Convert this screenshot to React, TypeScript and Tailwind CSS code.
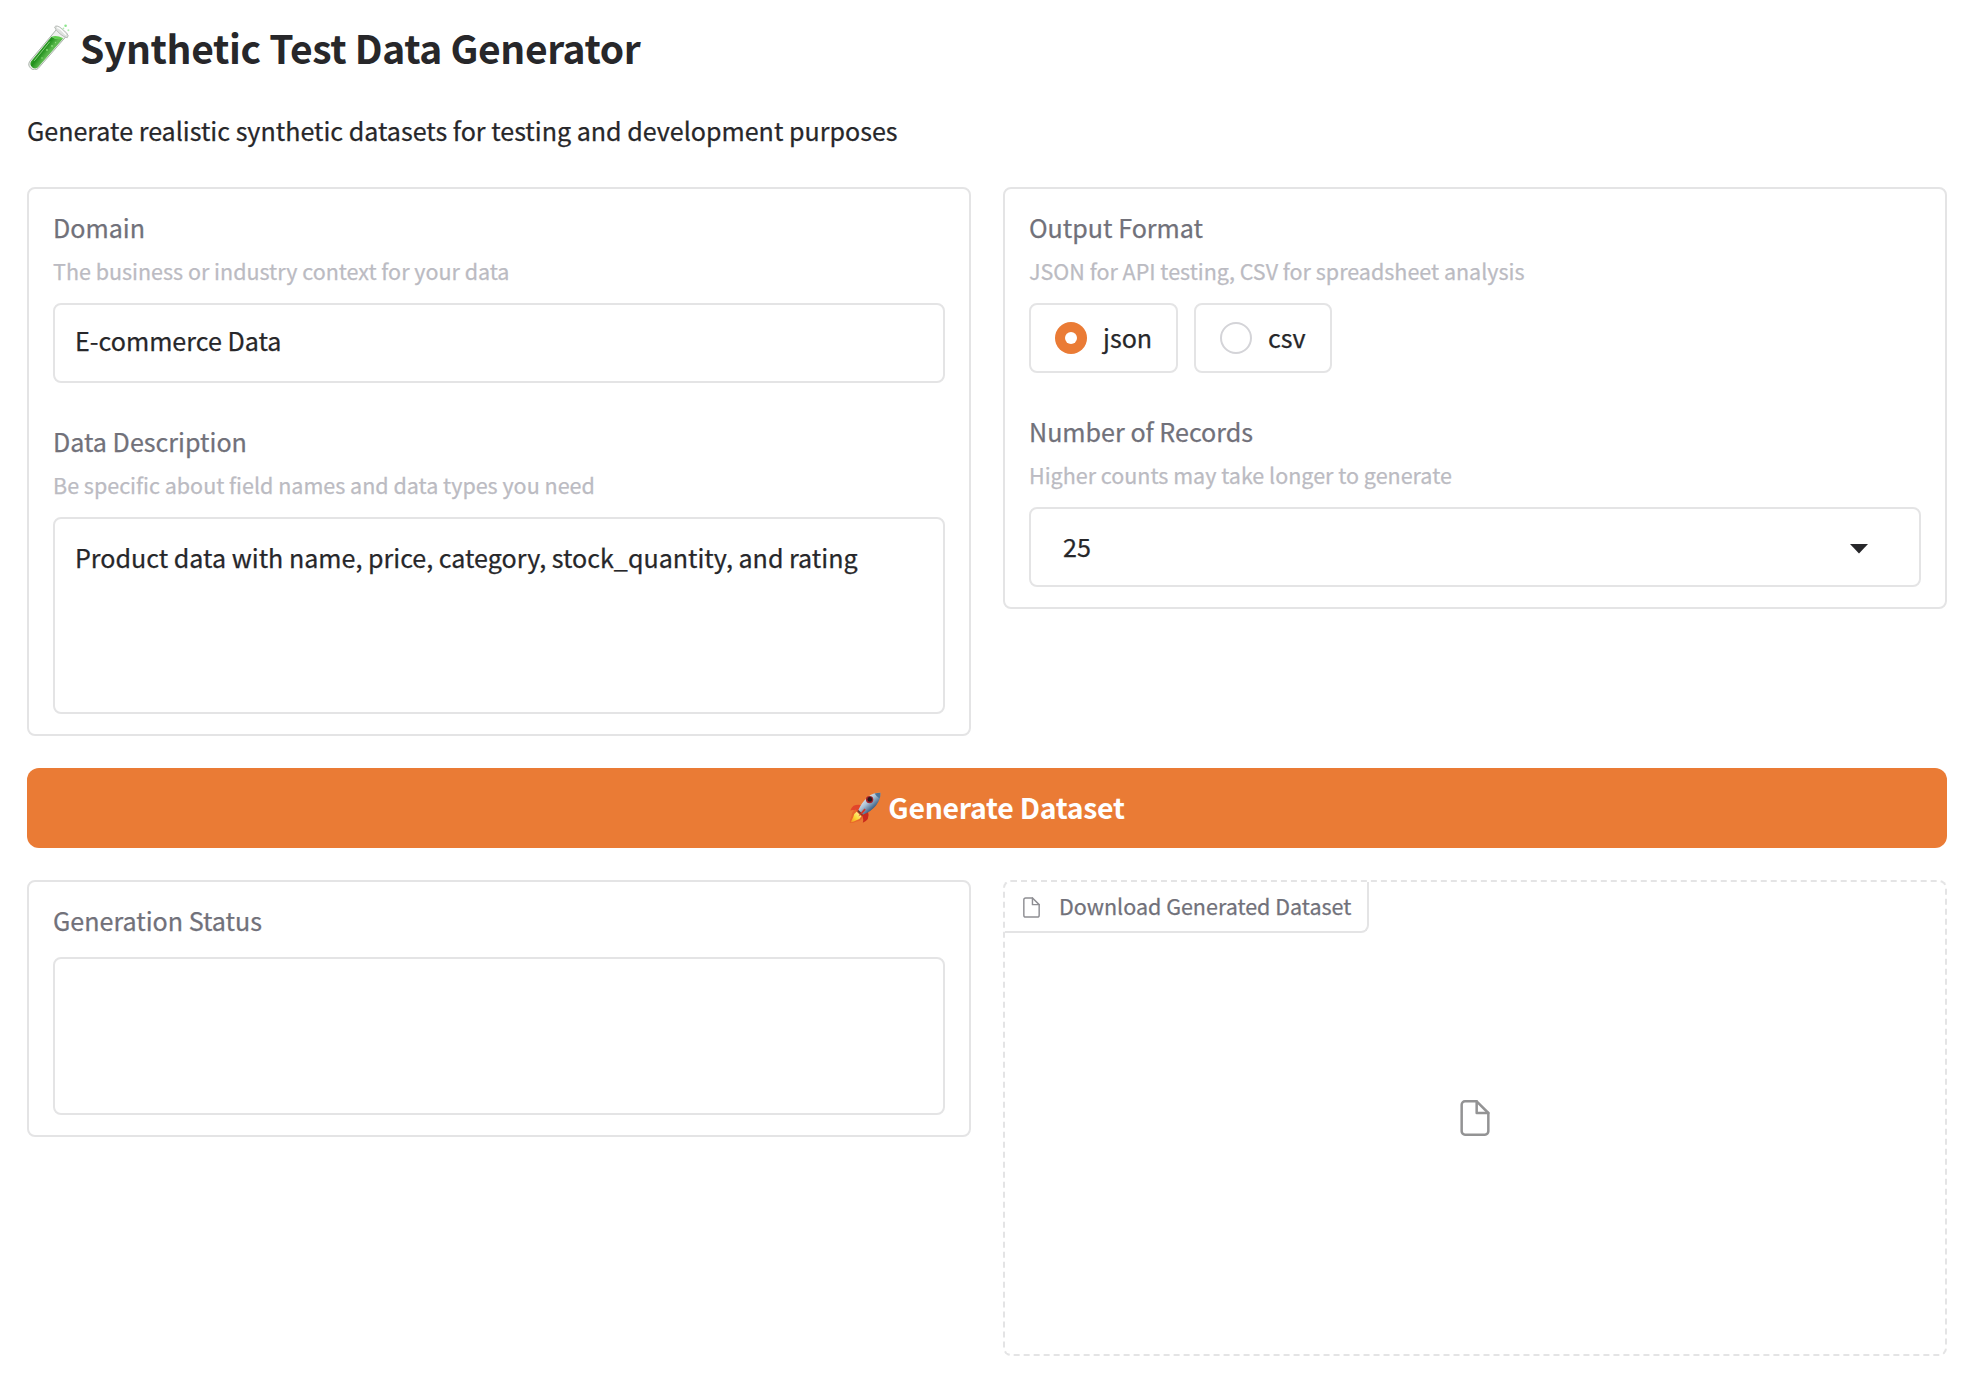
import type { ReactNode } from "react";

function TestTubeIcon() {
  return (
    <svg className="-mt-[3px] h-[48px] w-[46px]" viewBox="0 0 46 48" fill="none">
      <defs>
        <linearGradient id="tube-liquid" x1="8" y1="24" x2="20" y2="33" gradientUnits="userSpaceOnUse">
          <stop offset="0" stopColor="#6cc25c" />
          <stop offset="0.3" stopColor="#3faa33" />
          <stop offset="0.6" stopColor="#1f8f1b" />
          <stop offset="1" stopColor="#5cb84e" />
        </linearGradient>
      </defs>
      <path d="M29.5 7.5 L2.8 39.2 A5.6 5.6 0 0 0 11.2 46.4 L38.8 14.8 Z" fill="#eef0ee" stroke="#a9b3a9" strokeWidth="1" />
      <path d="M24.5 14.8 L4 39.6 A4.6 4.6 0 0 0 10.8 45.4 L36.3 16.3 Q30 18.5 24.5 14.8 Z" fill="url(#tube-liquid)" />
      <path d="M24.5 14.8 Q29 12.5 36.3 16.3 Q31 19 24.5 14.8 Z" fill="#5fce4c" />
      <path d="M22.5 20 L7.5 38.5" stroke="#b4e6a6" strokeWidth="1" strokeLinecap="round" opacity="0.7" />
      <g fill="#8be07a">
        <circle cx="20" cy="28" r="0.9" />
        <circle cx="25" cy="24" r="0.9" />
        <circle cx="15" cy="36" r="0.8" />
        <circle cx="28.5" cy="20.5" r="0.7" />
      </g>
      <path d="M27.6 5 Q29.5 2.5 34 6 L39.5 10.8 Q42.5 14 40.2 15.8 Q37.5 15.5 33 11.8 Q28 7.6 27.6 5 Z" fill="#dfe2df" stroke="#b3b8b3" strokeWidth="0.9" />
      <path d="M30.4 5.6 Q33 6 38.5 12.4" stroke="#ffffff" strokeWidth="1.2" strokeLinecap="round" />
      <circle cx="38.6" cy="3.8" r="1.3" fill="#8be58b" />
      <circle cx="41.4" cy="8.2" r="1" fill="#b2efb2" />
      <circle cx="36.4" cy="6.4" r="0.9" fill="#b2efb2" />
    </svg>
  );
}

function RocketIcon() {
  return (
    <svg className="h-8 w-8" viewBox="0 0 32 32" fill="none">
      <defs>
        <linearGradient id="rocket-body" x1="13" y1="8" x2="22" y2="18" gradientUnits="userSpaceOnUse">
          <stop offset="0" stopColor="#dfeaf3" />
          <stop offset="0.45" stopColor="#a9bfd2" />
          <stop offset="1" stopColor="#3f6287" />
        </linearGradient>
        <linearGradient id="rocket-flame" x1="11" y1="20" x2="1" y2="31" gradientUnits="userSpaceOnUse">
          <stop offset="0" stopColor="#fff6a0" />
          <stop offset="0.5" stopColor="#fbd633" />
          <stop offset="1" stopColor="#f08a1c" />
        </linearGradient>
      </defs>
      <path d="M13 13.2 Q8 12.2 4.6 13.8 Q2.6 15.4 1.2 18.4 Q5 17 8.6 19.6 Z" fill="#e2452a" />
      <path d="M19 19.6 Q20.4 23.6 18.8 27 Q17 29.4 13.8 30.8 Q15.2 27 12.4 23.6 Z" fill="#c92a1c" />
      <path d="M6.6 17.6 Q2.6 19.6 2.6 24 Q0.8 27.6 0.8 31 Q4.6 31 7.8 29.4 Q12.6 29 14 25 Z" fill="#e8672a" />
      <path d="M7.6 19.8 Q4.6 21.6 4.2 25.2 Q2.6 28 2 30.2 Q5 29.6 7.4 28.2 Q11 27.4 12.4 24.2 Z" fill="url(#rocket-flame)" />
      <path d="M31.4 0.8 Q24 0.6 19 5 Q12.4 10.6 9.4 18 L14 22.6 Q22 19.6 27 13.4 Q31.8 7.6 31.4 0.8 Z" fill="url(#rocket-body)" />
      <path d="M31.4 0.8 Q28.4 0.8 25.6 1.6 Q27.6 5 30.6 6.6 Q31.5 3.8 31.4 0.8 Z" fill="#4d7396" />
      <path d="M9.4 18 L14 22.6 L12.4 23.6 L8.4 19.6 Z" fill="#6b3a2f" />
      <circle cx="20.6" cy="7.6" r="3.7" fill="#a3222a" />
      <circle cx="20.8" cy="7.4" r="2.3" fill="#28191f" />
      <path d="M15.4 16.4 Q12 20.4 9.2 24.6 Q13.6 22 16.8 17.8 Z" fill="#d63423" />
    </svg>
  );
}

function FileIcon({ className }: { className: string }) {
  return (
    <svg
      className={className}
      viewBox="0 0 24 24"
      fill="none"
      stroke="currentColor"
      strokeWidth="1.5"
      strokeLinecap="round"
      strokeLinejoin="round"
    >
      <path d="M13 2H6a2 2 0 0 0-2 2v16a2 2 0 0 0 2 2h12a2 2 0 0 0 2-2V9z" />
      <polyline points="13 2 13 9 20 9" />
    </svg>
  );
}

function Panel({ children }: { children: ReactNode }) {
  return (
    <section className="rounded-[8px] border-2 border-[#e4e4e5] px-6 pt-[18px] pb-5">{children}</section>
  );
}

function Field({ label, info, children }: { label: string; info?: string; children: ReactNode }) {
  return (
    <div>
      <div className="text-[25.1px] leading-[40px] text-[#71717a]">{label}</div>
      {info && <div className="mt-2 mb-4 text-[21.5px] leading-[32px] text-[#bbbbc2]">{info}</div>}
      {children}
    </div>
  );
}

function RadioOption({ label, checked, className }: { label: string; checked?: boolean; className: string }) {
  return (
    <div
      className={`flex h-[70px] items-center gap-4 rounded-[8px] border-2 border-[#e4e4e5] pl-6 ${className}`}
    >
      {checked ? (
        <span className="flex size-8 items-center justify-center rounded-full bg-[#ea7b35]">
          <span className="size-3 rounded-full bg-white" />
        </span>
      ) : (
        <span className="size-8 rounded-full border-2 border-[#d4d4d8]" />
      )}
      <span className="-mt-0.5 text-[25.1px] leading-[40px]">{label}</span>
    </div>
  );
}

const box = "rounded-[8px] border-2 border-[#e4e4e5]";

export default function App() {
  return (
    <div className="h-[1378px] bg-white pt-[19px] pr-[23px] pl-[27px] font-['Noto_Sans_CJK_SC',sans-serif] text-[#27272a] [-webkit-text-stroke:0.25px_currentColor]">
      <h1 className="flex h-14 items-center gap-[7px] text-[39px] leading-[56px] font-bold tracking-[-0.38px] [-webkit-text-stroke:0px]">
        <TestTubeIcon />
        Synthetic Test Data Generator
      </h1>
      <p className="mt-[35px] text-[25.07px] leading-[40px]">
        Generate realistic synthetic datasets for testing and development purposes
      </p>

      <div className="mt-[37px] grid grid-cols-2 items-start gap-8">
        <Panel>
          <div className="flex flex-col gap-[38px]">
            <Field label="Domain" info="The business or industry context for your data">
              <div className={`h-20 pt-[15px] pl-5 text-[25.1px] leading-[40px] ${box}`}>E-commerce Data</div>
            </Field>
            <Field label="Data Description" info="Be specific about field names and data types you need">
              <div className={`h-[197px] pt-[18px] pl-5 text-[25.07px] leading-[40px] ${box}`}>
                Product data with name, price, category, stock_quantity, and rating
              </div>
            </Field>
          </div>
        </Panel>
        <Panel>
          <div className="flex flex-col gap-[38px]">
            <Field label="Output Format" info="JSON for API testing, CSV for spreadsheet analysis">
              <div className="flex gap-4">
                <RadioOption label="json" checked className="w-[149px]" />
                <RadioOption label="csv" className="w-[138px]" />
              </div>
            </Field>
            <Field label="Number of Records" info="Higher counts may take longer to generate">
              <div className={`flex h-20 items-start justify-between pr-[51px] pl-8 ${box}`}>
                <span className="mt-[17px] text-[25.1px] leading-[40px]">25</span>
                <svg className="mt-[35px] h-[10px] w-[18px]" viewBox="0 0 18 10">
                  <path d="M0 0H18L9 9.4Z" fill="#27272a" />
                </svg>
              </div>
            </Field>
          </div>
        </Panel>
      </div>

      <button className="mt-8 flex h-20 w-full items-center justify-center gap-[7px] rounded-[12px] bg-[#ea7b35] text-[28.4px] leading-[40px] font-bold tracking-[-0.25px] text-white [-webkit-text-stroke:0px]">
        <RocketIcon />
        <span className="-mt-[3px]">Generate Dataset</span>
      </button>

      <div className="mt-8 grid grid-cols-2 items-start gap-8">
        <Panel>
          <Field label="Generation Status">
            <div className={`mt-[17px] h-[158px] ${box}`} />
          </Field>
        </Panel>
        <section className="flex h-[476px] flex-col rounded-[8px] border-2 border-dashed border-[#e4e4e5]">
          <div className="flex h-[51px] w-[364px] shrink-0 items-start gap-4 rounded-br-[8px] border-r-2 border-b-2 border-[#e4e4e5] pl-[15px] text-[21.5px] leading-[32px] text-[#71717a]">
            <FileIcon className="mt-[13.5px] size-[23px] text-[#8e8e93]" />
            <span className="mt-2">Download Generated Dataset</span>
          </div>
          <div className="flex h-[370px] items-center justify-center">
            <FileIcon className="size-10 text-[#939394]" />
          </div>
        </section>
      </div>
    </div>
  );
}
